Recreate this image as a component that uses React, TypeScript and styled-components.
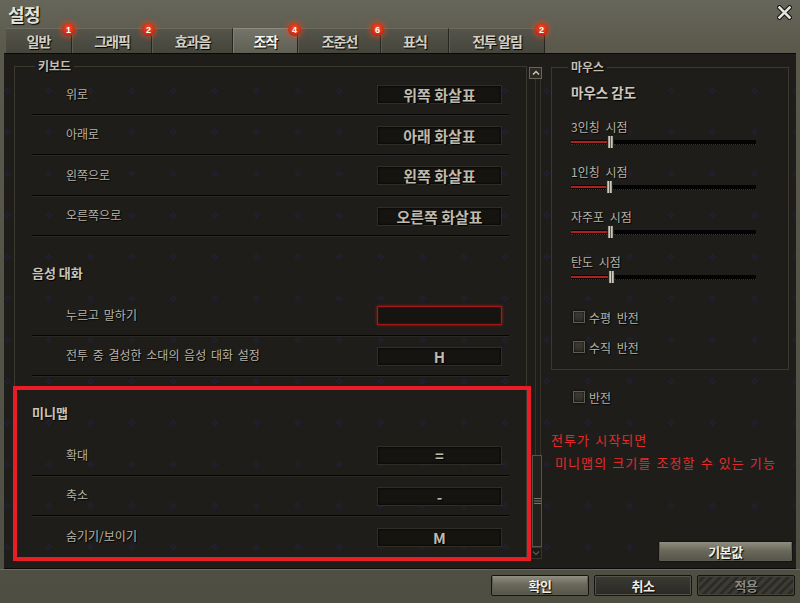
import React from 'react';
import styled, { createGlobalStyle } from 'styled-components';

const GlobalStyle = createGlobalStyle`
  html, body {
    margin: 0;
    padding: 0;
    background: #1f1d19;
  }
  body {
    font-family: "Noto Sans CJK KR", "Noto Sans", sans-serif;
  }
  * { box-sizing: border-box; }
`;

const dot = 'radial-gradient(circle, rgba(34, 34, 72, 0.7) 0.9px, transparent 1.4px)';

const Window = styled.div`
  width: 800px;
  height: 603px;
  display: flex;
  flex-direction: column;
  overflow: hidden;
  background: linear-gradient(180deg, #67665a 0%, #5a594c 8%, #4f4e43 100%);
`;

const TitleBar = styled.div`
  height: 28px;
  display: flex;
  align-items: center;
  justify-content: space-between;
  padding: 0 8px 0 8px;
`;

const Title = styled.h1`
  margin: 0;
  font-size: 18px;
  line-height: 22px;
  font-weight: 700;
  letter-spacing: -0.5px;
  color: #e3e2d9;
  text-shadow: 1px 1px 1px #000;
`;

const CloseButton = styled.button`
  width: 15px;
  height: 15px;
  padding: 0;
  border: 0;
  background: none;
  display: flex;
  margin-top: -4px;
`;

const TabStrip = styled.div`
  height: 25px;
  display: flex;
  align-items: flex-end;
  padding-left: 5px;
`;

const Tab = styled.div<{ $w: number; $active?: boolean }>`
  position: relative;
  width: ${p => p.$w}px;
  height: 25px;
  display: flex;
  align-items: center;
  justify-content: center;
  font-size: 14px;
  font-weight: 700;
  letter-spacing: -1px;
  color: ${p => (p.$active ? '#f4f3ec' : '#d2d0c5')};
  text-shadow: 1px 1px 1px #000;
  border: 1px solid #25241e;
  border-bottom: 0;
  border-top-color: ${p => (p.$active ? '#8c8b7e' : '#6c6b5f')};
  border-left-color: ${p => (p.$active ? '#807f72' : '#5d5c50')};
  background: ${p =>
    p.$active
      ? 'linear-gradient(180deg, #75746a 0%, #605f53 100%)'
      : 'linear-gradient(180deg, #55544a 0%, #46453b 100%)'};
`;

const Badge = styled.span`
  position: absolute;
  top: -6px;
  right: -4px;
  width: 13px;
  height: 13px;
  border-radius: 50%;
  display: flex;
  align-items: center;
  justify-content: center;
  font-family: "Liberation Sans", Arial, sans-serif;
  font-size: 9px;
  font-weight: 700;
  letter-spacing: 0;
  color: #fff;
  text-shadow: none;
  background: radial-gradient(circle at 50% 40%, #f0502a 0%, #c8280f 70%, #9c1a08 100%);
  box-shadow: 0 0 5px 2px rgba(230, 70, 30, 0.55);
  z-index: 2;
`;

const Content = styled.div`
  height: 516px;
  margin: 0 4px;
  display: flex;
  border-top: 1px solid #0a0907;
  border-bottom: 1px solid #0a0907;
  background-color: #1f1d19;
  background-image: ${dot}, ${dot}, ${dot}, ${dot};
  background-size: 41.5px 41.5px;
  background-position: 22px 16px, 26px 16px, 24px 14px, 24px 18px;
`;

const LeftPane = styled.div`
  width: 541px;
  display: flex;
`;

const ScrollArea = styled.div`
  flex: 1;
  padding: 5px 2px 0 10px;
`;

const Group = styled.fieldset`
  margin: 0;
  padding: 1px 17px 0 17px;
  border: 1px solid #3a382f;
  min-width: 0;
`;

const Legend = styled.legend<{ $x: number }>`
  margin-left: ${p => p.$x}px;
  padding: 0 3px;
  font-size: 12px;
  line-height: 14px;
  font-weight: 700;
  color: #c3bfb2;
  text-shadow: 1px 1px 1px #000;
`;

const Section = styled.div`
  position: relative;
`;

const Highlight = styled(Section)`
  &::after {
    content: '';
    position: absolute;
    top: 10px;
    left: -19px;
    right: -22px;
    bottom: -4px;
    border: 4px solid #ea1c26;
    pointer-events: none;
  }
`;

const SectionHeader = styled.div`
  height: 59px;
  padding: 26px 0 0 0;
  font-size: 13px;
  line-height: 22px;
  font-weight: 700;
  color: #c9c5b8;
  text-shadow: 1px 1px 1px #000;
`;

const KeyRow = styled.div<{ $last?: boolean }>`
  height: 40.5px;
  display: flex;
  align-items: center;
  justify-content: space-between;
  padding: 0 7px 0 34px;
  border-bottom: ${p => (p.$last ? '0' : '1px solid #060504')};
  box-shadow: ${p => (p.$last ? 'none' : '0 1px 0 #2a2822')};
`;

const KeyLabel = styled.span`
  font-size: 12px;
  line-height: 16px;
  word-spacing: 2px;
  color: #b6b2a6;
  text-shadow: 1px 1px 1px #000;
`;

const KeyBox = styled.div<{ $listening?: boolean }>`
  width: 125px;
  height: 19px;
  margin-top: 2px;
  display: flex;
  align-items: center;
  justify-content: center;
  font-size: 15px;
  font-weight: 700;
  line-height: 17px;
  color: #bebaad;
  text-shadow: 1px 1px 1px #000;
  background: #151410;
  border: 1px solid ${p => (p.$listening ? '#a11a1a' : '#2f2d26')};
  box-shadow: ${p =>
    p.$listening
      ? '0 0 3px rgba(210, 30, 30, 0.7), inset 0 0 3px rgba(160, 20, 20, 0.4)'
      : 'inset 0 0 3px #000'};
`;

const Scrollbar = styled.div`
  width: 13px;
  margin-right: 3px;
  padding: 13px 0 9px;
  display: flex;
  flex-direction: column;
  align-items: flex-start;
`;

const ScrollButton = styled.div<{ $dim?: boolean }>`
  width: 13px;
  height: 12px;
  display: flex;
  align-items: center;
  justify-content: center;
  background: ${p => (p.$dim ? '#1c1a16' : '#2b2922')};
  border: 1px solid ${p => (p.$dim ? '#37352d' : '#67655a')};
`;

const ScrollTrack = styled.div`
  flex: 1;
  width: 13px;
  display: flex;
  flex-direction: column;
  justify-content: flex-end;
  background: linear-gradient(
    90deg,
    transparent 6px,
    #34322a 6px,
    #34322a 7px,
    transparent 7px,
    transparent 11px,
    #34322a 11px,
    #34322a 12px,
    transparent 12px
  );
`;

const ScrollThumb = styled.div`
  width: 10px;
  height: 92px;
  margin-left: 3px;
  display: flex;
  align-items: center;
  justify-content: center;
  background: #23211c;
  border: 1px solid #56544a;
`;

const RightPane = styled.div`
  flex: 1;
  display: flex;
  flex-direction: column;
  padding: 6px 3px 6px 6px;
`;

const MouseGroup = styled(Group)`
  margin-right: 4px;
  padding: 8px 0 12px 19px;
`;

const SubTitle = styled.div`
  font-size: 13.5px;
  line-height: 20px;
  font-weight: 700;
  color: #cdc9bc;
  text-shadow: 1px 1px 1px #000;
`;

const SliderBlock = styled.div<{ $first?: boolean }>`
  margin-top: ${p => (p.$first ? 17 : 15)}px;
`;

const SliderLabel = styled.div`
  font-size: 12px;
  line-height: 16px;
  word-spacing: 3px;
  color: #b6b2a6;
  text-shadow: 1px 1px 1px #000;
`;

const SliderTrack = styled.div`
  width: 185px;
  height: 14px;
  display: flex;
  align-items: center;
`;

const SliderFill = styled.div`
  height: 5px;
  background: linear-gradient(180deg, #140505 0 1px, #a82222 1px 3px, #140505 3px 4px, transparent 4px);
  border-bottom: 1px dotted #3a362e;
`;

const SliderRest = styled.div`
  flex: 1;
  height: 5px;
  background: linear-gradient(180deg, #050404 0 4px, transparent 4px);
  border-bottom: 1px dotted #3a362e;
`;

const SliderThumb = styled.div`
  width: 7px;
  height: 14px;
  border: 1px solid #22201b;
  background: linear-gradient(90deg, #8c887b 0%, #dcd8ca 35%, #5c5a50 50%, #d4d0c2 65%, #8c887b 100%);
`;

const CheckRow = styled.label<{ $gap: number; $indent: number }>`
  height: 20px;
  margin-top: ${p => p.$gap}px;
  padding-left: ${p => p.$indent}px;
  display: flex;
  align-items: center;
  gap: 4px;
  font-size: 12px;
  word-spacing: 3px;
  color: #b6b2a6;
  text-shadow: 1px 1px 1px #000;
`;

const CheckBox = styled.span`
  width: 12px;
  height: 12px;
  background: linear-gradient(180deg, #3d3c36, #2c2b27);
  border: 1px solid #5e5d54;
  box-shadow: 0 0 2px #000, inset 0 0 2px #000;
`;

const Note = styled.div<{ $indent?: number; $gap: number }>`
  margin-top: ${p => p.$gap}px;
  padding-left: ${p => p.$indent ?? 0}px;
  font-size: 13px;
  line-height: 20px;
  letter-spacing: 1.1px;
  word-spacing: 1px;
  color: #e42a2a;
`;

const Button = styled.button<{ $variant?: 'light' | 'dark' | 'disabled'; $w: number }>`
  width: ${p => p.$w}px;
  height: 21px;
  padding: 0;
  font-family: inherit;
  font-size: 13px;
  font-weight: 700;
  letter-spacing: -0.5px;
  line-height: 19px;
  text-shadow: 1px 1px 1px #000;
  border: 1px solid #141410;
  border-radius: 2px;
  color: ${p => (p.$variant === 'disabled' ? '#8b8a80' : '#eeede6')};
  background: ${p =>
    p.$variant === 'dark'
      ? 'linear-gradient(180deg, #3b3a33 0%, #2a2924 100%)'
      : p.$variant === 'disabled'
      ? 'repeating-linear-gradient(135deg, #3c3b34 0 3px, #2c2b26 3px 6px)'
      : 'linear-gradient(180deg, #8e8d7e 0%, #6a695b 45%, #55544a 100%)'};
  box-shadow: ${p =>
    p.$variant === 'dark'
      ? 'inset 0 0 0 1px #55544a'
      : p.$variant === 'disabled'
      ? 'inset 0 0 0 1px #45443c'
      : 'inset 0 1px 0 rgba(255,255,255,0.3), inset 0 0 0 1px #5d5c50'};
`;

const DefaultButton = styled(Button)`
  margin-top: auto;
  align-self: flex-end;
`;

const Footer = styled.div`
  height: 34px;
  display: flex;
  justify-content: flex-end;
  align-items: flex-start;
  gap: 5px;
  padding: 5px 5px 0 0;
  border-top: 1px solid #6c6b5d;
`;

const tabs = [
  { label: '일반', w: 67, badge: '1' },
  { label: '그래픽', w: 80, badge: '2' },
  { label: '효과음', w: 81 },
  { label: '조작', w: 65, badge: '4', active: true },
  { label: '조준선', w: 83, badge: '6' },
  { label: '표식', w: 68 },
  { label: '전투 알림', w: 96, badge: '2' },
];

const keyboardRows = [
  { label: '위로', key: '위쪽 화살표' },
  { label: '아래로', key: '아래 화살표' },
  { label: '왼쪽으로', key: '왼쪽 화살표' },
  { label: '오른쪽으로', key: '오른쪽 화살표' },
];

const minimapRows = [
  { label: '확대', key: '=' },
  { label: '축소', key: '-' },
  { label: '숨기기/보이기', key: 'M' },
];

const sliders = [
  { label: '3인칭 시점', value: 36 },
  { label: '1인칭 시점', value: 35 },
  { label: '자주포 시점', value: 36 },
  { label: '탄도 시점', value: 37 },
];

const CloseIcon = () => (
  <svg width="15" height="15" viewBox="0 0 15 15">
    <path d="M2.5 2.5 L12.5 12.5 M12.5 2.5 L2.5 12.5" stroke="#111" strokeWidth="4.6" strokeLinecap="square" />
    <path d="M2.5 2.5 L12.5 12.5 M12.5 2.5 L2.5 12.5" stroke="#e2e1da" strokeWidth="2.6" strokeLinecap="square" />
  </svg>
);

const Chevron = ({ down, color }: { down?: boolean; color: string }) => (
  <svg width="8" height="6" viewBox="0 0 8 6">
    <path d={down ? 'M1 1.5 L4 4.5 L7 1.5' : 'M1 4.5 L4 1.5 L7 4.5'} stroke={color} strokeWidth="1.4" fill="none" />
  </svg>
);

const Grip = () => (
  <svg width="7" height="6" viewBox="0 0 7 6">
    <path d="M0 0.5 H7 M0 3 H7 M0 5.5 H7" stroke="#77756a" strokeWidth="1" />
  </svg>
);

export default function App() {
  return (
    <>
      <GlobalStyle />
      <Window>
        <TitleBar>
          <Title>설정</Title>
          <CloseButton aria-label="닫기">
            <CloseIcon />
          </CloseButton>
        </TitleBar>
        <TabStrip>
          {tabs.map(t => (
            <Tab key={t.label} $w={t.w} $active={t.active}>
              {t.label}
              {t.badge && <Badge>{t.badge}</Badge>}
            </Tab>
          ))}
        </TabStrip>
        <Content>
          <LeftPane>
            <ScrollArea>
              <Group>
                <Legend $x={3}>키보드</Legend>
                <Section>
                  {keyboardRows.map(r => (
                    <KeyRow key={r.label}>
                      <KeyLabel>{r.label}</KeyLabel>
                      <KeyBox>{r.key}</KeyBox>
                    </KeyRow>
                  ))}
                </Section>
                <Section>
                  <SectionHeader>음성 대화</SectionHeader>
                  <KeyRow>
                    <KeyLabel>누르고 말하기</KeyLabel>
                    <KeyBox $listening />
                  </KeyRow>
                  <KeyRow>
                    <KeyLabel>전투 중 결성한 소대의 음성 대화 설정</KeyLabel>
                    <KeyBox>H</KeyBox>
                  </KeyRow>
                </Section>
                <Highlight>
                  <SectionHeader>미니맵</SectionHeader>
                  {minimapRows.map((r, i) => (
                    <KeyRow key={r.label} $last={i === minimapRows.length - 1}>
                      <KeyLabel>{r.label}</KeyLabel>
                      <KeyBox>{r.key}</KeyBox>
                    </KeyRow>
                  ))}
                </Highlight>
              </Group>
            </ScrollArea>
            <Scrollbar>
              <ScrollButton>
                <Chevron color="#d0cdc0" />
              </ScrollButton>
              <ScrollTrack>
                <ScrollThumb>
                  <Grip />
                </ScrollThumb>
              </ScrollTrack>
              <ScrollButton $dim>
                <Chevron down color="#55534a" />
              </ScrollButton>
            </Scrollbar>
          </LeftPane>
          <RightPane>
            <MouseGroup>
              <Legend $x={-3}>마우스</Legend>
              <SubTitle>마우스 감도</SubTitle>
              {sliders.map((s, i) => (
                <SliderBlock key={s.label} $first={i === 0}>
                  <SliderLabel>{s.label}</SliderLabel>
                  <SliderTrack>
                    <SliderFill style={{ width: s.value }} />
                    <SliderThumb />
                    <SliderRest />
                  </SliderTrack>
                </SliderBlock>
              ))}
              <CheckRow $gap={23} $indent={2}>
                <CheckBox />
                수평 반전
              </CheckRow>
              <CheckRow $gap={10} $indent={2}>
                <CheckBox />
                수직 반전
              </CheckRow>
            </MouseGroup>
            <CheckRow $gap={17} $indent={22}>
              <CheckBox />
              반전
            </CheckRow>
            <Note $gap={23}>전투가 시작되면</Note>
            <Note $gap={3} $indent={4}>
              미니맵의 크기를 조정할 수 있는 기능
            </Note>
            <DefaultButton $w={135}>기본값</DefaultButton>
          </RightPane>
        </Content>
        <Footer>
          <Button $w={98}>확인</Button>
          <Button $w={98} $variant="dark">
            취소
          </Button>
          <Button $w={98} $variant="disabled">
            적용
          </Button>
        </Footer>
      </Window>
    </>
  );
}
